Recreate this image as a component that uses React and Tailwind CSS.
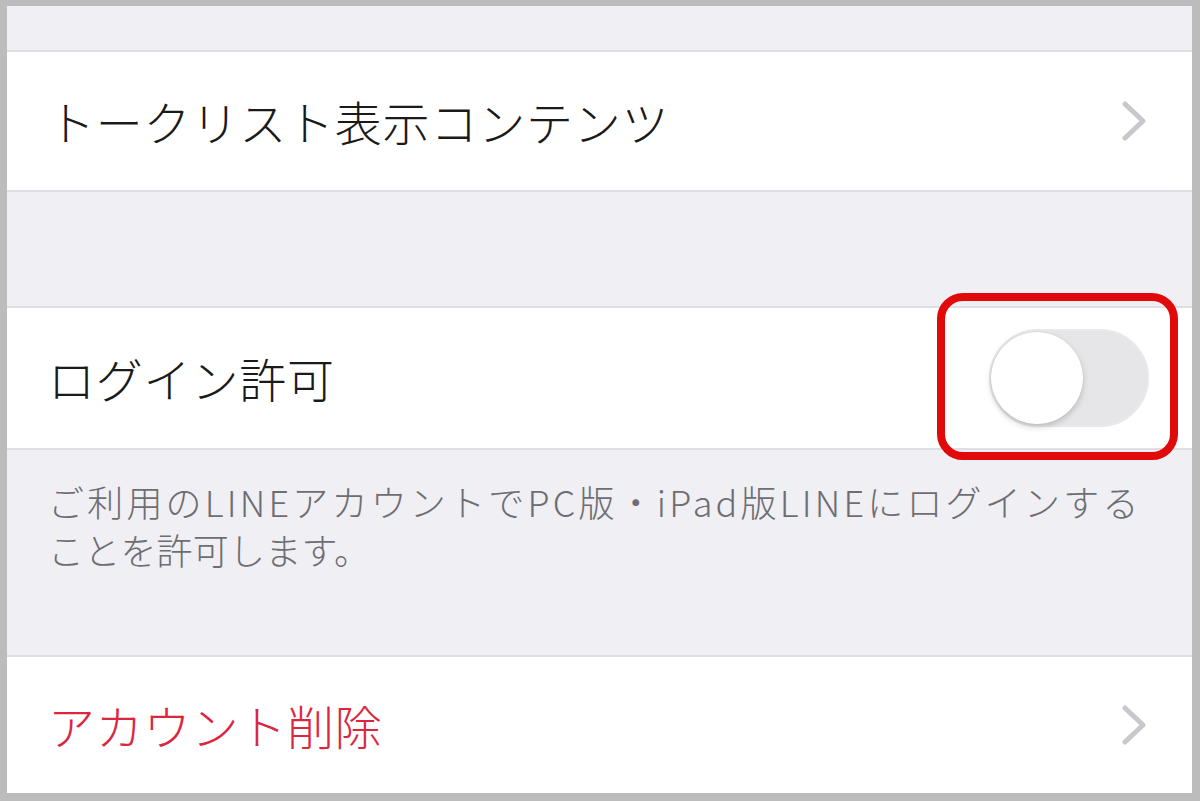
const font = { fontFamily: '"Noto Sans CJK JP", "Noto Sans", sans-serif' };

function Chevron() {
	return (
		<svg width="28" height="40" viewBox="0 0 28 40" className="shrink-0">
			<path d="M5 3 L23 20 L5 37" fill="none" stroke="#c7c7cc" strokeWidth="5" strokeLinecap="round" strokeLinejoin="round" />
		</svg>
	);
}

function Row({ children, className }) {
	return (
		<div className={"relative flex items-center bg-white border-y-2 border-[#dedee3] pl-[41px] pr-[44px] " + className}>
			{children}
		</div>
	);
}

export default function App() {
	return (
		<div className="w-[1200px] h-[801px] bg-[#bcbcbc] pt-[6px] pl-[7px] pr-[8px] pb-[8px]" style={font}>
			<div className="h-full flex flex-col bg-[#efeff4] overflow-hidden">
				<div className="h-[44px] shrink-0" />
				<Row className="h-[142px] justify-between">
					<span className="text-[47px] font-light text-[#1a1a1a] tracking-[0.8px]">トークリスト表示コンテンツ</span>
					<Chevron />
				</Row>
				<div className="h-[114px] shrink-0" />
				<Row className="h-[144px] justify-between">
					<span className="text-[47px] font-light text-[#1a1a1a] tracking-[0.8px]">ログイン許可</span>
					<div className="relative mr-[-1px]">
						<div className="w-[160px] h-[98px] rounded-full bg-[#e6e6e8] border-2 border-[#e9e9ec] relative">
							<div className="absolute left-[0px] top-[1px] w-[92px] h-[92px] rounded-full bg-white shadow-[0_3px_6px_rgba(0,0,0,0.18),0_0_1px_rgba(0,0,0,0.15)]" />
						</div>
						<div className="absolute -left-[52px] -top-[36px] w-[241px] h-[167px] rounded-[26px] border-[8px] border-[#e10a0a]" />
					</div>
				</Row>
				<div className="h-[205px] shrink-0 flex flex-col pl-[41px] pr-[20px] pt-[27px] text-[36px] font-light leading-[48px] text-[#6d6d72] whitespace-nowrap">
					<span className="tracking-[3.2px]">ご利用のLINEアカウントでPC版・iPad版LINEにログインする</span>
					<span className="tracking-[0.2px]">ことを許可します。</span>
				</div>
				<Row className="h-[138px] justify-between border-b-0">
					<span className="text-[47px] font-light text-[#dc2640] tracking-[0.8px]">アカウント削除</span>
					<Chevron />
				</Row>
			</div>
		</div>
	);
}
